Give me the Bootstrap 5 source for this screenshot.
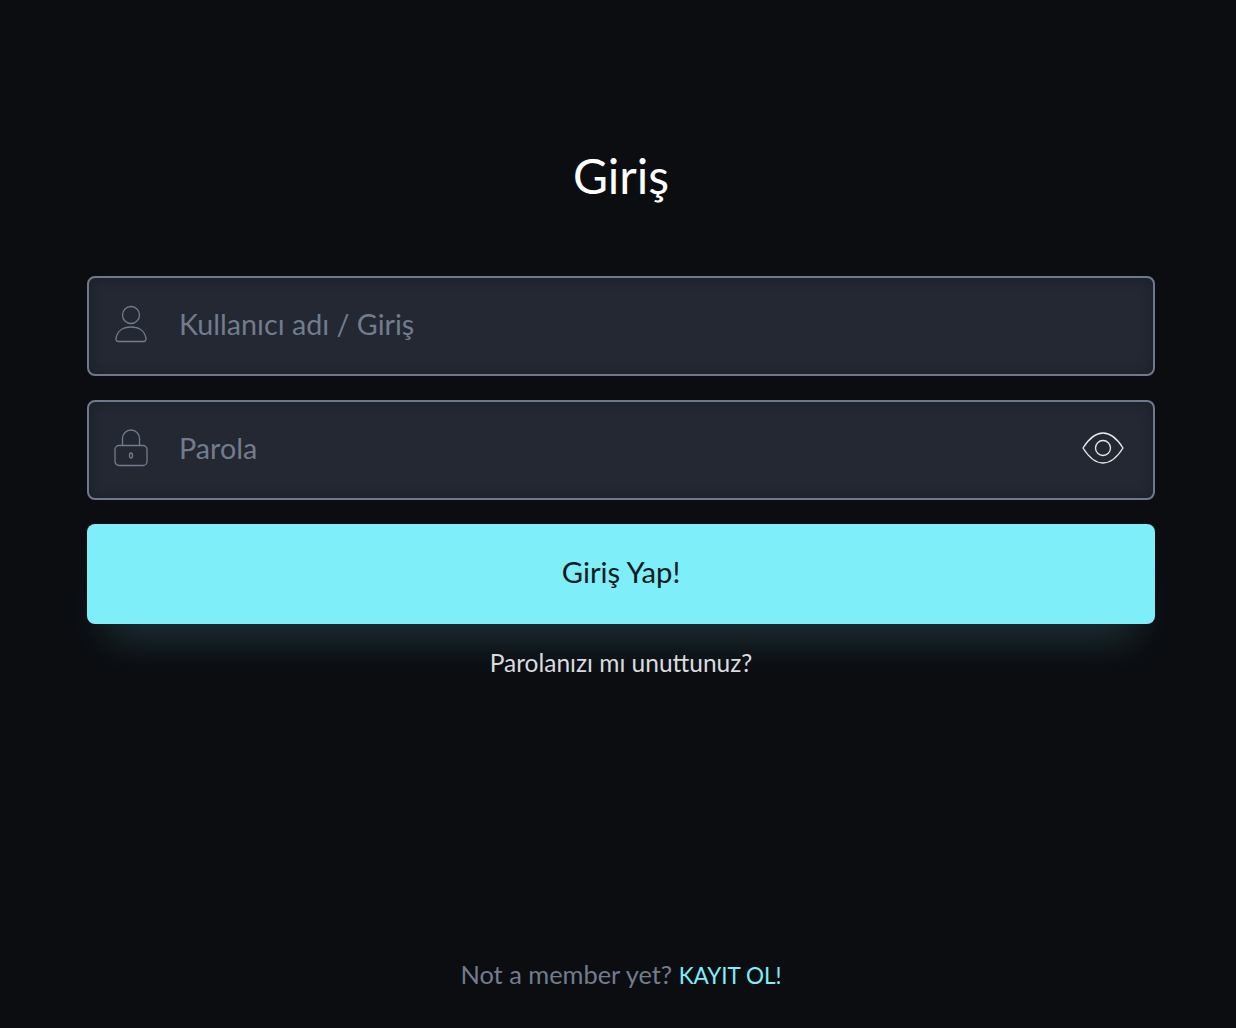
<!DOCTYPE html>
<html lang="tr">
<head>
  <meta charset="UTF-8" />
  <meta name="viewport" content="width=device-width, initial-scale=1.0" />
  <title>Giriş</title>
  <link href="https://cdn.jsdelivr.net/npm/bootstrap@5.3.0/dist/css/bootstrap.min.css" rel="stylesheet" />
  <style>
    body {
      background-color: #0b0d11;
      font-family: "Lato", "Liberation Sans", sans-serif;
    }
    .login-page {
      height: 1028px;
      padding: 0 81px 0 87px;
    }
    .login-title {
      margin: 148px 0 72px;
      height: 56px;
      font-size: 48px;
      line-height: 56px;
      font-weight: 400;
      color: #fff;
    }
    .login-field {
      height: 100px;
      margin-bottom: 24px;
      padding: 0 29px 0 25px;
      background: #232833;
      border: 2px solid #6f798b;
      border-radius: 8px;
      box-shadow: inset 0 0 14px rgba(11, 13, 17, .35);
    }
    .login-field svg {
      margin-top: -4px;
    }
    .login-field .form-control {
      padding: 0;
      margin-left: 31px;
      margin-top: -3px;
      background: transparent;
      border: 0;
      box-shadow: none;
      font-size: 28.7px;
      color: #fff;
    }
    .login-field .form-control::placeholder {
      color: #727c8d;
      opacity: 1;
    }
    .login-submit {
      height: 100px;
      background: #7eeef9;
      border: 0;
      border-radius: 8px;
      font-size: 29.2px;
      color: #0b1a20;
      padding-bottom: 10px;
      box-shadow: 0 36px 40px -20px rgba(125, 240, 250, .16);
    }
    .login-submit:hover {
      background: #7eeef9;
      color: #0b1a20;
    }
    .login-forgot {
      margin-top: 24px;
      font-size: 24.5px;
      line-height: 30px;
      color: #d9dbde;
      text-decoration: none;
    }
    .login-foot {
      padding-bottom: 37px;
      font-size: 25.4px;
      line-height: 30px;
      color: #727c8d;
    }
    .login-foot a {
      font-size: 22.5px;
      color: #7eeef9;
      text-decoration: none;
    }
  </style>
</head>
<body>
  <div class="login-page d-flex flex-column">
    <h1 class="login-title text-center">Giriş</h1>
    <form>
      <div class="login-field d-flex align-items-center">
        <svg width="34" height="38" viewBox="0 0 34 38" fill="none" stroke="#727c8d" stroke-width="1.3" class="flex-shrink-0">
          <circle cx="17" cy="10" r="8.500"/>
          <path d="M4 36.500h26a2.500 2.500 0 0 0 2-3C31 26 25 22 17 22S3 26 2 33.500a2.500 2.500 0 0 0 2 3z"/>
        </svg>
        <input type="text" class="form-control" placeholder="Kullanıcı adı / Giriş" />
      </div>
      <div class="login-field d-flex align-items-center">
        <svg width="34" height="38" viewBox="0 0 34 38" fill="none" stroke="#727c8d" stroke-width="1.3" class="flex-shrink-0">
          <path d="M8.500 17V9.500a8.500 8.500 0 0 1 17 0V17"/>
          <rect x="1" y="16.500" width="32" height="20" rx="4"/>
          <ellipse cx="17" cy="26.500" rx="1.500" ry="2.500"/>
        </svg>
        <input type="password" class="form-control" placeholder="Parola" />
        <svg width="42" height="32" viewBox="0 0 42 32" fill="none" stroke="#e8eaec" stroke-width="1.3" class="flex-shrink-0">
          <path d="M1 16C6 8 13 1 21 1s15 7 20 15c-5 8-12 15-20 15S6 24 1 16z"/>
          <circle cx="21" cy="16" r="7.500"/>
        </svg>
      </div>
      <button type="button" class="login-submit btn w-100 d-block">Giriş Yap!</button>
    </form>
    <a href="#" class="login-forgot text-center">Parolanızı mı unuttunuz?</a>
    <p class="login-foot text-center mt-auto mb-0">Not a member yet? <a href="#">KAYIT OL!</a></p>
  </div>
  <script src="https://cdn.jsdelivr.net/npm/bootstrap@5.3.0/dist/js/bootstrap.bundle.min.js"></script>
</body>
</html>
